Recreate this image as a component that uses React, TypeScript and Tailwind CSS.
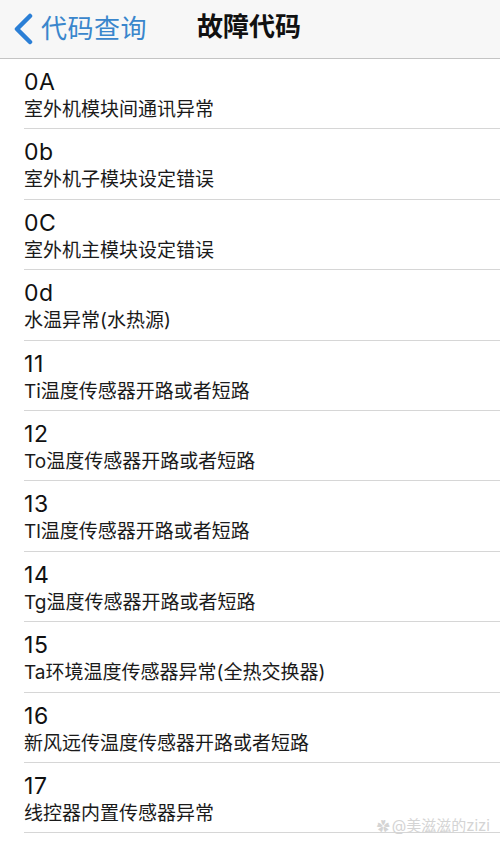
import React from 'react';

const codes = [
  { code: '0A', desc: '室外机模块间通讯异常' },
  { code: '0b', desc: '室外机子模块设定错误' },
  { code: '0C', desc: '室外机主模块设定错误' },
  { code: '0d', desc: '水温异常(水热源)' },
  { code: '11', desc: 'Ti温度传感器开路或者短路' },
  { code: '12', desc: 'To温度传感器开路或者短路' },
  { code: '13', desc: 'Tl温度传感器开路或者短路' },
  { code: '14', desc: 'Tg温度传感器开路或者短路' },
  { code: '15', desc: 'Ta环境温度传感器异常(全热交换器)' },
  { code: '16', desc: '新风远传温度传感器开路或者短路' },
  { code: '17', desc: '线控器内置传感器异常' },
];

const font = { fontFamily: 'Inter, "Noto Sans CJK SC", sans-serif' };

export default function App() {
  return (
    <div className="relative w-[500px] h-[846px] overflow-hidden bg-white" style={font}>
      <header className="h-[59px] bg-[#f7f7f7] border-b border-[#c4c4c4] flex items-center relative">
        <div className="flex items-center pl-[11px] text-[#3a86cc]">
          <svg width="24" height="32" viewBox="0 0 24 32" className="mr-[6px]">
            <path d="M19 3 L6 16 L19 29" fill="none" stroke="#2b7fd6" strokeWidth="4.5" strokeLinecap="round" strokeLinejoin="round" />
          </svg>
          <span className="text-[26px] leading-[30px] tracking-[0.5px]">代码查询</span>
        </div>
        <h1 className="absolute left-[197px] top-[12px] text-[26px] leading-[30px] font-semibold text-[#111]">故障代码</h1>
      </header>
      <ul>
        {codes.map((item) => (
          <li key={item.code} className="h-[70.4px] ml-[24px] border-b border-[#d6d6d6] pt-[10px]">
            <div className="text-[23px] leading-[26px] tracking-[0.6px] text-[#111]">{item.code}</div>
            <div className="mt-[2px] text-[19px] leading-[26px] text-[#1a1a1a]">{item.desc}</div>
          </li>
        ))}
      </ul>
      <div className="absolute right-[10px] top-[816px] flex items-center gap-[2px] text-[15px] leading-[20px] text-[#d4d4d4]">
        <span className="text-[13px]">✿</span>
        <span>@美滋滋的zizi</span>
      </div>
    </div>
  );
}
